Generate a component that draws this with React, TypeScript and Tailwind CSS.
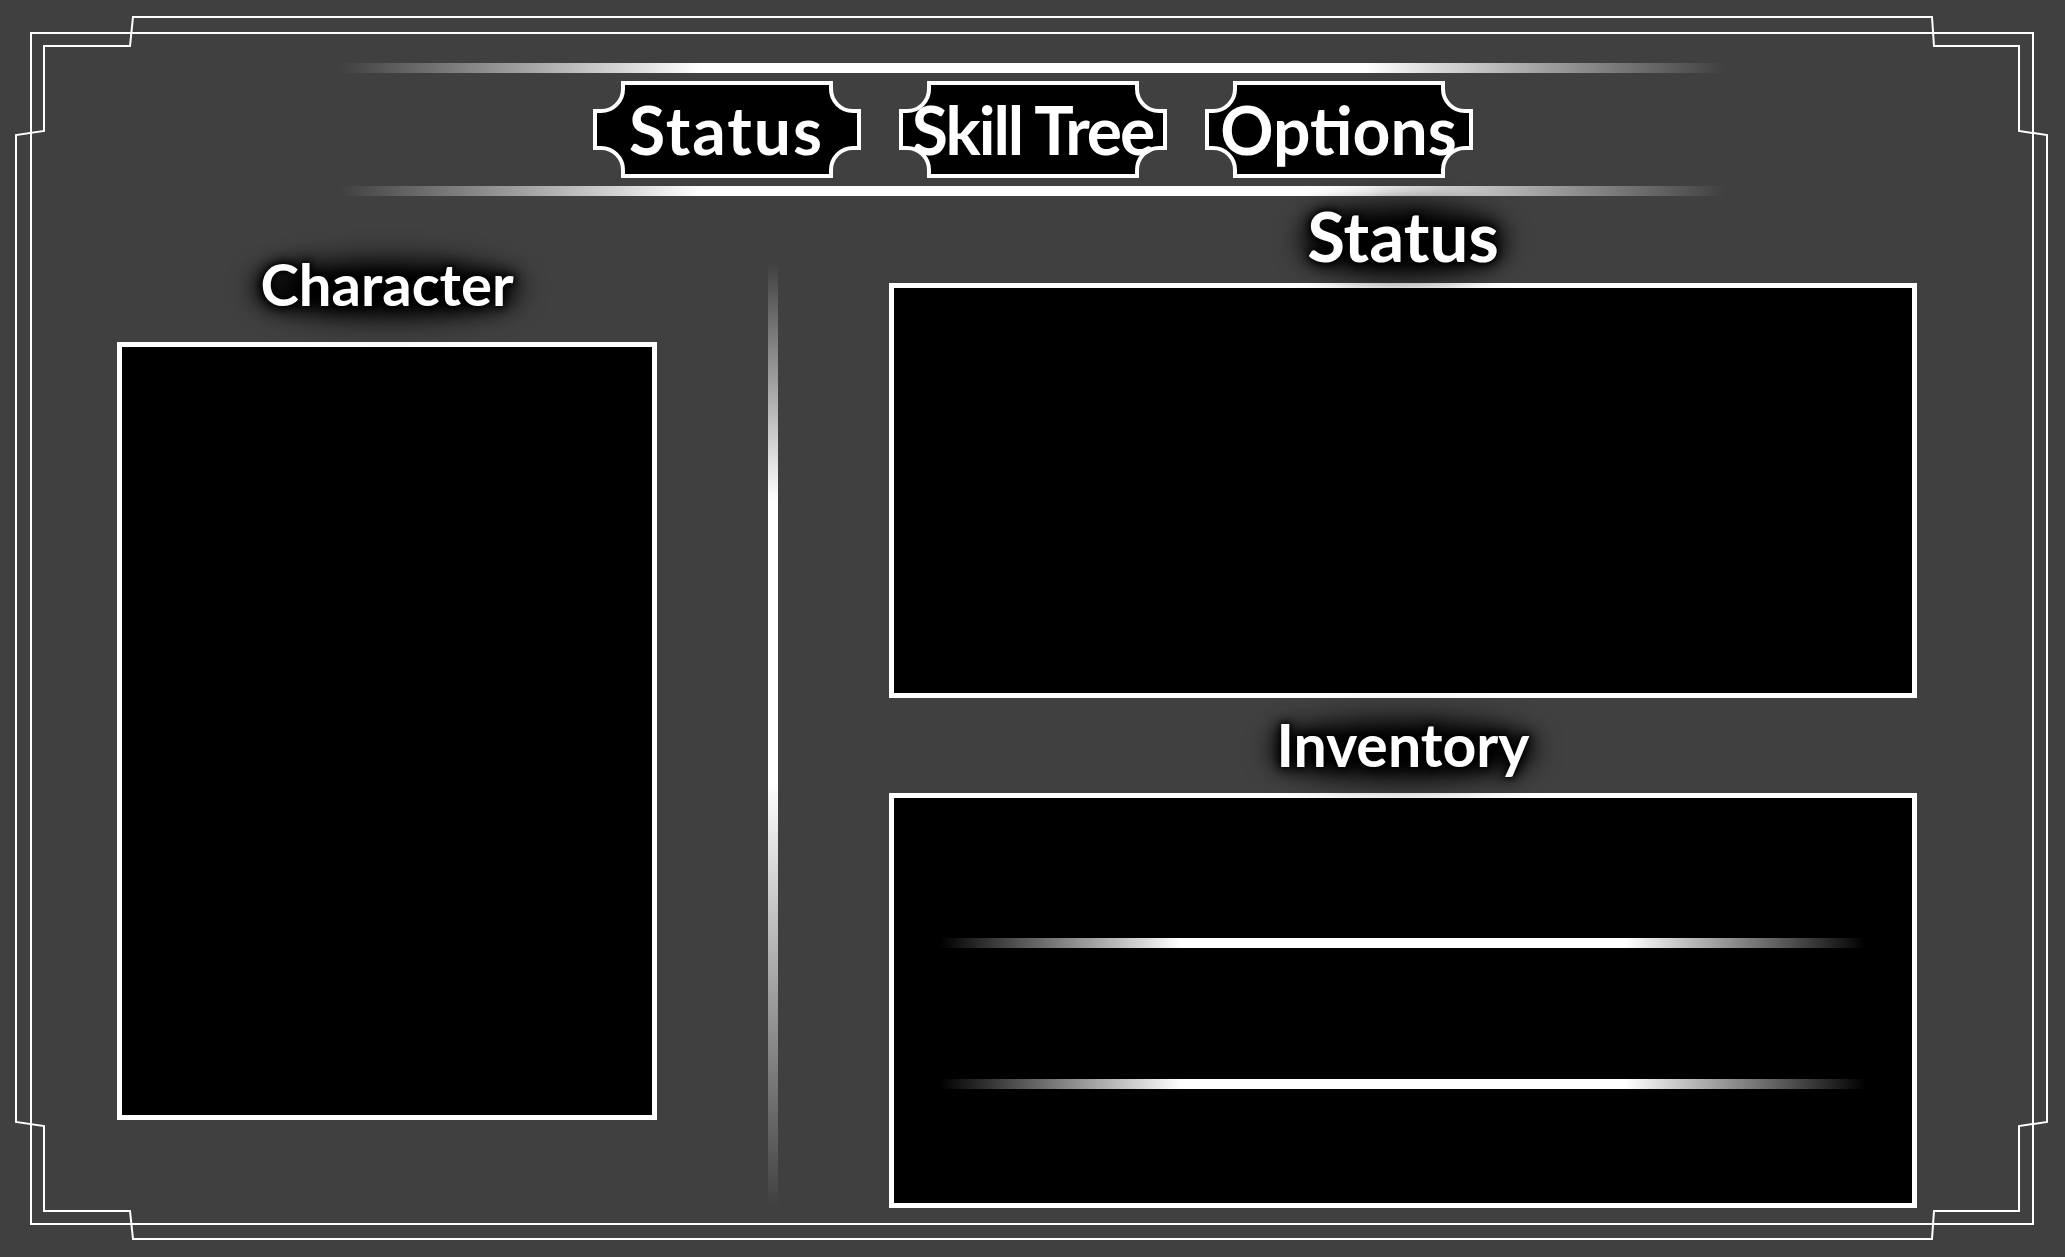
import React from "react";

function tabPath(W: number, H: number) {
  const x0 = 2, y0 = 2, x1 = W - 2, y1 = H - 2, s = 6, r = 22;
  return [
    `M ${x0 + s + r} ${y0}`,
    `L ${x1 - s - r} ${y0}`,
    `L ${x1 - s - r} ${y0 + s}`,
    `A ${r} ${r} 0 0 0 ${x1 - s} ${y0 + s + r}`,
    `L ${x1} ${y0 + s + r}`,
    `L ${x1} ${y1 - s - r}`,
    `L ${x1 - s} ${y1 - s - r}`,
    `A ${r} ${r} 0 0 0 ${x1 - s - r} ${y1 - s}`,
    `L ${x1 - s - r} ${y1}`,
    `L ${x0 + s + r} ${y1}`,
    `L ${x0 + s + r} ${y1 - s}`,
    `A ${r} ${r} 0 0 0 ${x0 + s} ${y1 - s - r}`,
    `L ${x0} ${y1 - s - r}`,
    `L ${x0} ${y0 + s + r}`,
    `L ${x0 + s} ${y0 + s + r}`,
    `A ${r} ${r} 0 0 0 ${x0 + s + r} ${y0 + s}`,
    "Z",
  ].join(" ");
}

function Tab({ label, textClass }: { label: string; textClass: string }) {
  return (
    <div className="relative w-[268px] h-[97px] flex items-center justify-center">
      <svg className="absolute inset-0" width="268" height="97" viewBox="0 0 268 97">
        <path d={tabPath(268, 97)} fill="#000" stroke="#fff" strokeWidth="4" />
      </svg>
      <span className={textClass}>{label}</span>
    </div>
  );
}

function Title({ label, textClass }: { label: string; textClass: string }) {
  return (
    <div className="flex justify-center">
      <span className={textClass}>
        <span className="absolute -left-[6px] -right-[6px] top-[6px] -bottom-[4px] rounded-[50%] bg-black blur-[14px]" />
        <span className="relative [text-shadow:0_0_6px_#000,0_0_12px_#000,0_0_18px_#000]">{label}</span>
      </span>
    </div>
  );
}

function Frame() {
  const d = [
    "M 133 17",
    "L 1932 17",
    "L 1934 46",
    "L 2019 46",
    "L 2019 131",
    "L 2047 135",
    "L 2047 1122",
    "L 2019 1126",
    "L 2019 1211",
    "L 1934 1211",
    "L 1932 1239",
    "L 133 1239",
    "L 130 1211",
    "L 44 1211",
    "L 44 1126",
    "L 16 1122",
    "L 16 135",
    "L 44 131",
    "L 44 46",
    "L 130 46",
    "Z",
  ].join(" ");
  return (
    <svg
      className="absolute inset-0 pointer-events-none"
      width="2065"
      height="1257"
      viewBox="0 0 2065 1257"
    >
      <rect x="31" y="33" width="2002" height="1191" fill="none" stroke="#fff" strokeWidth="2" />
      <path d={d} fill="none" stroke="#fff" strokeWidth="2" />
    </svg>
  );
}

export default function App() {
  return (
    <div className="relative w-[2065px] h-[1257px] bg-[#404040] overflow-hidden font-['Lato',sans-serif]">
      <Frame />
      <div className="relative flex flex-col">
        <div className="pt-[63px] flex flex-col items-center">
          <div className="w-[1385px] h-[10px] bg-[linear-gradient(to_right,transparent,#fff_26%,#fff_74%,transparent)]" />
          <div className="mt-[8px] flex gap-[38px]">
            <Tab
              label="Status"
              textClass="relative text-white font-bold text-[66px] leading-none tracking-[2px]"
            />
            <Tab
              label="Skill Tree"
              textClass="relative text-white font-bold text-[66px] leading-none tracking-[-2px]"
            />
            <Tab
              label="Options"
              textClass="relative text-white font-bold text-[66px] leading-none"
            />
          </div>
          <div className="mt-[8px] w-[1385px] h-[10px] bg-[linear-gradient(to_right,transparent,#fff_26%,#fff_74%,transparent)]" />
        </div>

        <div className="flex pl-[117px]">
          <div className="w-[540px] flex flex-col">
            <div className="mt-[59px]">
              <Title
                label="Character"
                textClass="relative inline-block text-white font-bold text-[58px] leading-none"
              />
            </div>
            <div className="mt-[29px] h-[778px] border-[5px] border-white bg-black" />
          </div>

          <div className="ml-[111px] mt-[67px] w-[10px] h-[944px] bg-[linear-gradient(to_bottom,transparent,#fff_25%,#fff_55%,transparent)]" />

          <div className="ml-[111px] w-[1028px] flex flex-col">
            <div className="mt-[5px]">
              <Title
                label="Status"
                textClass="relative inline-block text-white font-bold text-[69px] leading-none"
              />
            </div>
            <div className="mt-[13px] h-[415px] border-[5px] border-white bg-black" />
            <div className="mt-[17px]">
              <Title
                label="Inventory"
                textClass="relative inline-block text-white font-bold text-[59px] leading-none"
              />
            </div>
            <div className="mt-[19px] h-[415px] border-[5px] border-white bg-black flex flex-col items-center pt-[140px] gap-[131px]">
              <div className="w-[926px] h-[10px] bg-[linear-gradient(to_right,transparent,#fff_26%,#fff_74%,transparent)]" />
              <div className="w-[926px] h-[10px] bg-[linear-gradient(to_right,transparent,#fff_26%,#fff_74%,transparent)]" />
            </div>
          </div>
        </div>
      </div>
    </div>
  );
}
